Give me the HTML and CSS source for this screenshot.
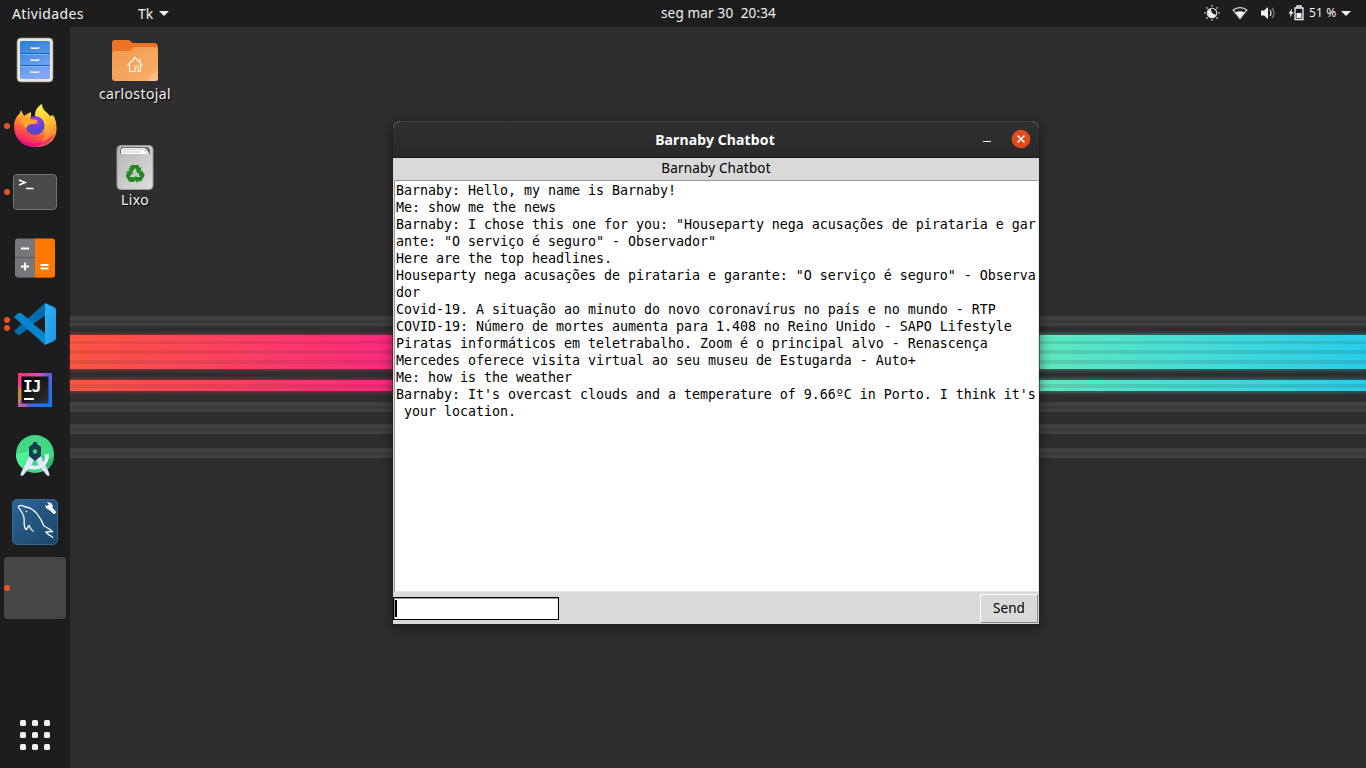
FILE: index.html
```
<!DOCTYPE html>
<html lang="pt">
<head>
<meta charset="utf-8">
<title>Barnaby Chatbot</title>
<link rel="stylesheet" href="styles.css">
</head>
<body>
<header class="panel">
  <div class="panel-left"><span class="activities">Atividades</span><span class="app-menu">Tk</span><i class="caret"></i></div>
  <div class="clock">seg mar 30&nbsp; 20:34</div>
  <div class="tray">
    <svg class="tray-icon" width="16" height="16" viewBox="0 0 16 16"><circle cx="8" cy="8" r="4.800" fill="none" stroke="#ddd" stroke-width="1.1"/><path d="M7 4a4.3 4.3 0 1 0 5 5.5A4.8 4.8 0 0 1 7 4z" fill="#f2f2f2"/><g fill="#aaa"><circle cx="8" cy="1" r=".9"/><circle cx="8" cy="15" r=".9"/><circle cx="1" cy="8" r=".9"/><circle cx="15" cy="8" r=".9"/><circle cx="3" cy="3" r=".9"/><circle cx="13" cy="3" r=".9"/><circle cx="3" cy="13" r=".9"/><circle cx="13" cy="13" r=".9"/></g></svg>
    <svg class="tray-icon" width="16" height="16" viewBox="0 0 16 16"><path d="M1.2 5C5 1.7 11 1.7 14.800 5L8 13.500z" fill="none" stroke="#ddd" stroke-width="1.200"/><path d="M3.500 7.300c3-1.500 6-1.500 9 0L8 13.500z" fill="#f2f2f2"/></svg>
    <svg class="tray-icon" width="16" height="16" viewBox="0 0 16 16"><path d="M1 5.500h3L8 2v12L4 10.500H1z" fill="#f2f2f2"/><path d="M10 5q2 3 0 6" stroke="#ddd" stroke-width="1.300" fill="none"/><path d="M12 3q4 5 0 10" stroke="#777" stroke-width="1.300" fill="none"/></svg>
    <svg class="battery" width="17" height="16" viewBox="0 0 17 16"><path d="M4 3.500L.5 8.500h2L2 12.500l3.500-5.500H3.500z" fill="#f2f2f2"/><path d="M7 3h8v11.500H7zM9 3V1h4v2" fill="none" stroke="#f2f2f2" stroke-width="1.300"/><path d="M8.500 8h5v5h-5z" fill="#f2f2f2"/></svg>
    <span class="percent">51 %</span><i class="caret"></i>
  </div>
</header>
<div class="workspace">
  <nav class="dock">
    <div class="launcher"><svg width="48" height="48" viewBox="0 0 48 48"><defs><linearGradient id="files" x2=".3" y2="1"><stop stop-color="#267fd5"/><stop offset="1" stop-color="#80a9f8"/></linearGradient></defs><rect x="6" y="2" width="36" height="44" rx="4" fill="#e9e5df" stroke="#8b8884" stroke-width=".7"/><rect x="9" y="5" width="30" height="38" rx="2" fill="url(#files)"/><path d="M9 17.500h30M9 29.500h30" stroke="#1768b5"/><path d="M9 18.500h30M9 30.500h30" stroke="#8fc0f4" stroke-width=".8"/><path d="M20.500 11v1.300h7V11M20.500 23v1.300h7V23M20.500 35v1.300h7V35" fill="none" stroke="#f6eee6" stroke-width="1.500"/></svg></div>
    <div class="launcher"><i class="dots one"></i><svg width="48" height="48" viewBox="0 0 48 48"><defs><linearGradient id="fox" x1=".8" y1="0" x2=".3" y2="1"><stop stop-color="#fff44f"/><stop offset=".35" stop-color="#ffb52d"/><stop offset=".65" stop-color="#ff593e"/><stop offset="1" stop-color="#ee107d"/></linearGradient><linearGradient id="tail" x2=".3" y2="1"><stop stop-color="#fff44f"/><stop offset=".55" stop-color="#ffc52f"/><stop offset="1" stop-color="#ff7139"/></linearGradient><radialGradient id="globe" cx=".55" cy=".25"><stop stop-color="#a83bf0"/><stop offset="1" stop-color="#5b45c8"/></radialGradient></defs><path d="M24 45C11 45 3 36 3 24c0-6 3-10 6-13l1-3 3 6 3-2 4-2v5l8 2 6 8 9-3V14q2 5 2 11c0 12-9 20-21 20z" fill="url(#fox)"/><path d="M24 14c0-6 3-10 7-12 0 6 5 8 8 12l3-1c7 13 3 25-5 29-3 2-7 3-11 3 12-9 10-23-2-31z" fill="url(#tail)"/><path d="M5 33c8 11 28 11 38-1-3 9-11 13-19 13-9 0-16-5-19-12z" fill="#e4107b" opacity=".65"/><circle cx="24" cy="23.500" r="9.500" fill="url(#globe)"/><path d="M8 18c4-4 8-4 12-1l6 1c1 3-1 4-4 4-4 0-6 2-7 5-2-4-3-6-7-9z" fill="#ffa72c"/></svg></div>
    <div class="launcher"><i class="dots one"></i><svg width="48" height="48" viewBox="0 0 48 48"><rect x="2.500" y="6.500" width="43" height="35" rx="3.500" fill="#4a4a4a" stroke="#717171"/><path d="M8 12l6 2.500L8 17M15 20.500h7.500" fill="none" stroke="#fff" stroke-width="1.600"/></svg></div>
    <div class="launcher"><svg width="48" height="48" viewBox="0 0 48 48"><path d="M24 4.500H7a3 3 0 0 0-3 3v33a3 3 0 0 0 3 3h17z" fill="#77767b"/><path d="M24 4.500h17a3 3 0 0 1 3 3v33a3 3 0 0 1-3 3H24z" fill="#ff7800"/><path d="M4 23.500h20" stroke="#57565b"/><path d="M5 42q1 1.500 3 1.500h16" stroke="#57565b" fill="none"/><path d="M24 43.500h17q2 0 3-2" stroke="#cc4e00" fill="none"/><path d="M10 14.500h8M10 32.500h8M14 28.500v8M29.500 31h8M29.500 34.500h8" stroke="#fff" stroke-width="1.800"/></svg></div>
    <div class="launcher"><i class="dots two"></i><svg width="48" height="48" viewBox="0 0 48 48"><defs><linearGradient id="code" y2="1"><stop stop-color="#29b5f6"/><stop offset="1" stop-color="#2196e8"/></linearGradient></defs><path d="M3 31L34 3v13L10 34q-2 2-4 0z" fill="#006bb1"/><path d="M3 17l4-4h3l24 19v13L3 17z" fill="#0785cf"/><path d="M34 3l9 4q2 1 2 3v28q0 2-2 3l-9 4z" fill="url(#code)"/><path d="M34 16L22 24l12 9z" fill="#1d1d1d"/></svg></div>
    <div class="launcher"><svg width="48" height="48" viewBox="0 0 48 48"><defs><linearGradient id="idea" x1="0" y1="0" x2="1" y2=".8"><stop stop-color="#fe315d"/><stop offset=".4" stop-color="#e348b8"/><stop offset=".55" stop-color="#655cd8"/><stop offset="1" stop-color="#087cfa"/></linearGradient><linearGradient id="ink" y2="1"><stop stop-color="#000"/><stop offset="1" stop-color="#333"/></linearGradient></defs><path d="M7 7h34v34H7z" fill="url(#idea)"/><path d="M7 20l4 4v8l5 6v3H7z" fill="#b661a0"/><path d="M7 20l4 4v8l-4 5z" fill="#c58a41"/><path d="M10.500 10.500h27v27h-27z" fill="url(#ink)"/><path d="M13 33h10" stroke="#fff" stroke-width="2"/><text x="12" y="25.500" class="ij">IJ</text></svg></div>
    <div class="launcher"><svg width="48" height="48" viewBox="0 0 48 48"><circle cx="24" cy="22" r="19" fill="#42d982"/><path d="M5 22l19-4-13 18Q5 31 5 22z" fill="#4cf097"/><path d="M28 27l8 11q7-6 7-14l-5 3z" fill="#38bd70"/><path d="M19 24h5l-4 9-8 10-2 .5.500-3zM29 24h-5l4 9 8 10 2 .5-.5-3z" fill="#dce5fa" stroke="#dce5fa"/><path d="M14.500 33C25 39 37 34 36 22" fill="none" stroke="#e7edff" stroke-width="3.800"/><path d="M22 10h4v2l4 3v9l-6 5-6-5v-9l4-3z" fill="#173d50"/><circle cx="24" cy="19.500" r="2.200" fill="#42d982"/></svg></div>
    <div class="launcher"><svg width="48" height="48" viewBox="0 0 48 48"><defs><linearGradient id="sea" y2="1"><stop stop-color="#2c6598"/><stop offset="1" stop-color="#1b4465"/></linearGradient></defs><rect x="1.500" y="1.500" width="45" height="45" rx="4.500" fill="url(#sea)" stroke="#31699b"/><path d="M22.500 33.500q-3-2-4.500-6c-2 1-1 4-3 4-4-4 0-10-3-15C10 12 6 9 8 8c2-2 5 1 7 1 9 1 15 12 18 19 2 1 6 3 9 6-3-1-4 0-7 0 1 3 5 3 7 6" fill="none" stroke="#f3fbff" stroke-width="1.300"/><circle cx="15.500" cy="13.500" r=".8" fill="#fff"/><path d="M38 9l5 5" stroke="#fff" stroke-width="3.600" stroke-linecap="round"/><path d="M34 7l1 3 3 2 3-1 1-3-2-3-4-1 2 3-2 1z" fill="#fff"/></svg></div>
    <div class="launcher"><span class="running"></span><i class="dots one"></i></div>
    <div class="show-apps"><b></b><b></b><b></b><b></b><b></b><b></b><b></b><b></b><b></b></div>
  </nav>
  <main class="desktop">
    <div class="wallpaper"><i class="gray s1"></i><i class="color wide"></i><i class="color thin"></i><i class="gray s2"></i><i class="gray s3"></i><i class="gray s4"></i></div>
    <div class="shortcut">
      <svg width="48" height="48" viewBox="0 0 48 48"><defs><linearGradient id="folder" y2="1"><stop stop-color="#f19a4b"/><stop offset="1" stop-color="#f7af6e"/></linearGradient></defs><path d="M1 14V6q0-3 3-3h14l4 3h21q4 0 4 4v6H1z" fill="#ec7224"/><path d="M1 17q0-3 3-3h15l4-4h21q3 0 3 3v28q0 3-3 3H4q-3 0-3-3z" fill="url(#folder)"/><path d="M35 44l12-12v9q0 3-3 3z" fill="#f9bd86"/><path d="M16.500 28.500L24 20.500l7.500 8M18.500 27v7.500H24V29h3v5.500h2.500V27M29 25v-3.500" fill="none" stroke="#fdf0e2" stroke-width="1.200"/></svg>
      <span class="home-name">carlostojal</span>
    </div>
    <div class="shortcut">
      <svg width="48" height="48" viewBox="0 0 48 48"><defs><linearGradient id="bin" y2="1"><stop stop-color="#b4b4b4"/><stop offset="1" stop-color="#dedede"/></linearGradient></defs><rect x="6" y="2.500" width="36" height="44" rx="4" fill="url(#bin)" stroke="#9b9b9b"/><path d="M11 4h26l2 3v4H9V7z" fill="#686868"/><path d="M12 5h22l4 5-1 1H10V7z" fill="#fff"/><path d="M12 7l20-1 4 4M11 9h19" stroke="#aaa" fill="none" stroke-width=".7"/><g fill="#248722"><path d="M17.500 26.500l2.700-4.500h7l1.700 3 1.800-1-1.700 5.500h-5l2-1.200-2-3.300-3 4.500z"/><path d="M17.500 26.500l2.700-4.500h7l1.700 3 1.800-1-1.700 5.500h-5l2-1.200-2-3.300-3 4.500z" transform="rotate(120 24 31)"/><path d="M17.500 26.500l2.700-4.500h7l1.700 3 1.800-1-1.700 5.500h-5l2-1.200-2-3.300-3 4.500z" transform="rotate(240 24 31)"/></g></svg>
      <span class="trash-name">Lixo</span>
    </div>
  </main>
</div>
<section class="window">
  <div class="titlebar"><span class="title">Barnaby Chatbot</span><i class="minimize"></i><svg class="close" width="20" height="20" viewBox="0 0 20 20"><circle cx="10" cy="10" r="9.300" fill="#e24a19"/><path d="M6.500 6.500l7 7m0-7l-7 7" stroke="#fff" stroke-width="1.500"/></svg></div>
  <div class="heading"><span>Barnaby Chatbot</span></div>
  <pre class="chat">Barnaby: Hello, my name is Barnaby!
Me: show me the news
Barnaby: I chose this one for you: "Houseparty nega acusações de pirataria e gar
ante: "O serviço é seguro" - Observador"
Here are the top headlines.
Houseparty nega acusações de pirataria e garante: "O serviço é seguro" - Observa
dor
Covid-19. A situação ao minuto do novo coronavírus no país e no mundo - RTP
COVID-19: Número de mortes aumenta para 1.408 no Reino Unido - SAPO Lifestyle
Piratas informáticos em teletrabalho. Zoom é o principal alvo - Renascença
Mercedes oferece visita virtual ao seu museu de Estugarda - Auto+
Me: how is the weather
Barnaby: It's overcast clouds and a temperature of 9.66ºC in Porto. I think it's
 your location.</pre>
  <div class="compose"><div class="entry"><i class="caret-bar"></i></div><div class="send"><span>Send</span></div></div>
</section>
</body>
</html>
```
FILE: styles.css
```
* { box-sizing: border-box; }
body { margin: 0; width: 1366px; height: 768px; overflow: hidden; background: #2e2e2e; color: #f2f2f2; font: 14px/20px "Noto Sans", sans-serif; }
svg { display: block; }
.panel { height: 27px; background: #1d1d1d; display: grid; grid-template-columns: 1fr auto 1fr; align-items: center; }
.panel-left { display: flex; align-items: center; padding-left: 12px; }
.activities { width: 126px; letter-spacing: .38px; }
.app-menu { width: 21px; }
.caret { border: 5px solid transparent; border-top-color: #f2f2f2; border-bottom: 0; }
.clock { font-size: 13.5px; padding-left: 71px; letter-spacing: .17px; margin-top: -1px; }
.tray { display: flex; align-items: center; justify-content: flex-end; padding-right: 15px; margin-top: -1px; }
.tray-icon { margin-right: 12px; }
.battery { margin-right: 4px; }
.percent { font-size: 12px; width: 32px; white-space: nowrap; letter-spacing: .15px; }
.workspace { display: flex; height: 741px; }
.dock { width: 70px; background: #1d1d1d; display: flex; flex-direction: column; }
.launcher { position: relative; height: 66px; display: flex; align-items: center; justify-content: center; }
.dots { position: absolute; left: 4px; width: 6px; height: 6px; border-radius: 50%; background: #e95420; }
.two { margin-top: -8px; box-shadow: 0 8px #e95420; }
.running { width: 62px; height: 62px; border-radius: 4px; background: #464646; }
.ij { font: bold 16px "DejaVu Sans Mono", monospace; letter-spacing: -1px; fill: #fff; }
.show-apps { margin: auto 0 18px 20px; display: grid; grid-template-columns: repeat(3, 6px); gap: 6px; }
.show-apps b { height: 6px; border-radius: 1.5px; background: #efefef; }
.desktop { flex: 1; display: flex; flex-direction: column; align-items: flex-start; position: relative; padding: 10px 0 0 20px; background: #2e2e2e; }
.wallpaper { position: absolute; inset: 0; display: flex; flex-direction: column; padding-top: 289px; }
.gray { height: 10px; background: linear-gradient(#404040 0 4px, #393939 4px 7px, #404040 7px); box-shadow: 0 0 2px #343434; }
.color { background: linear-gradient(90deg, #ff553e 0, #ff287f 322px, #ff2695 420px, #5fe8be 970px, #48dfd4 1100px, #28cde9 1296px); position: relative; }
.color::before { content: ""; position: absolute; inset: -2px 0; background: inherit; opacity: .3; filter: blur(1.5px); }
.color::after { content: ""; position: absolute; inset: 0; }
.wide { height: 34px; margin-top: 9px; }
.thin { height: 11px; margin-top: 11px; }
.wide::after { background: linear-gradient(transparent 6px, #39393925 6px 9px, transparent 9px 15px, #39393925 15px 19px, transparent 19px 25px, #39393925 25px 29px, transparent 29px); }
.thin::after { background: linear-gradient(transparent 4px, #39393925 4px 8px, transparent 8px); }
.s2 { margin-top: 11px; }
.s3 { margin-top: 12px; }
.s4 { margin-top: 14px; }
.shortcut { position: relative; width: 90px; height: 106px; display: flex; flex-direction: column; align-items: center; text-shadow: 1px 1px 1px #000; }
.shortcut span { margin-top: -1px; letter-spacing: .4px; }
.window { position: absolute; left: 393px; top: 121px; width: 646px; height: 503px; display: flex; flex-direction: column; border-radius: 8px 8px 0 0; background: #d9d9d9; box-shadow: 0 0 0 1px #20202090, 0 3px 11px 2px #0006; color: #000; }
.titlebar { height: 37px; border-radius: 8px 8px 0 0; border-top: 1px solid #414141; border-bottom: 1px solid #181818; background: linear-gradient(#303030, #292929); color: #fff; display: grid; grid-template-columns: 1fr auto 1fr; position: relative; align-items: center; }
.title { grid-column: 2; font-weight: 700; font-size: 14px; letter-spacing: .12px; position: relative; left: -1px; }
.minimize { position: absolute; left: 590px; top: 19px; width: 8px; height: 1px; background: #fff; }
.close { position: absolute; left: 618px; top: 7px; }
.heading { height: 22px; display: flex; align-items: center; justify-content: center; font-size: 13.5px; letter-spacing: .17px; padding-bottom: 2px; }
.chat { margin: 0 0 0 1px; height: 412px; background: #fff; border: 1px solid #e5e5e5; border-top-color: #999; border-left-color: #999; padding: 1px; font: 13.333px/17px "DejaVu Sans Mono", monospace; letter-spacing: -.027px; }
.compose { display: flex; flex: 1; justify-content: space-between; align-items: flex-start; padding: 2px 1px 0 0; }
.entry { width: 166px; height: 23px; margin-top: 3px; border: 1px solid #000; background: #fff; box-shadow: inset 1px 1px #999; padding: 2px 1px; }
.caret-bar { display: block; width: 2px; height: 17px; background: #000; }
.send { width: 58px; height: 29px; border: 1px solid #fff; border-right-color: #888; border-bottom-color: #888; display: flex; align-items: center; justify-content: center; font-size: 13.5px; padding-bottom: 2px; letter-spacing: .1px; }
```
